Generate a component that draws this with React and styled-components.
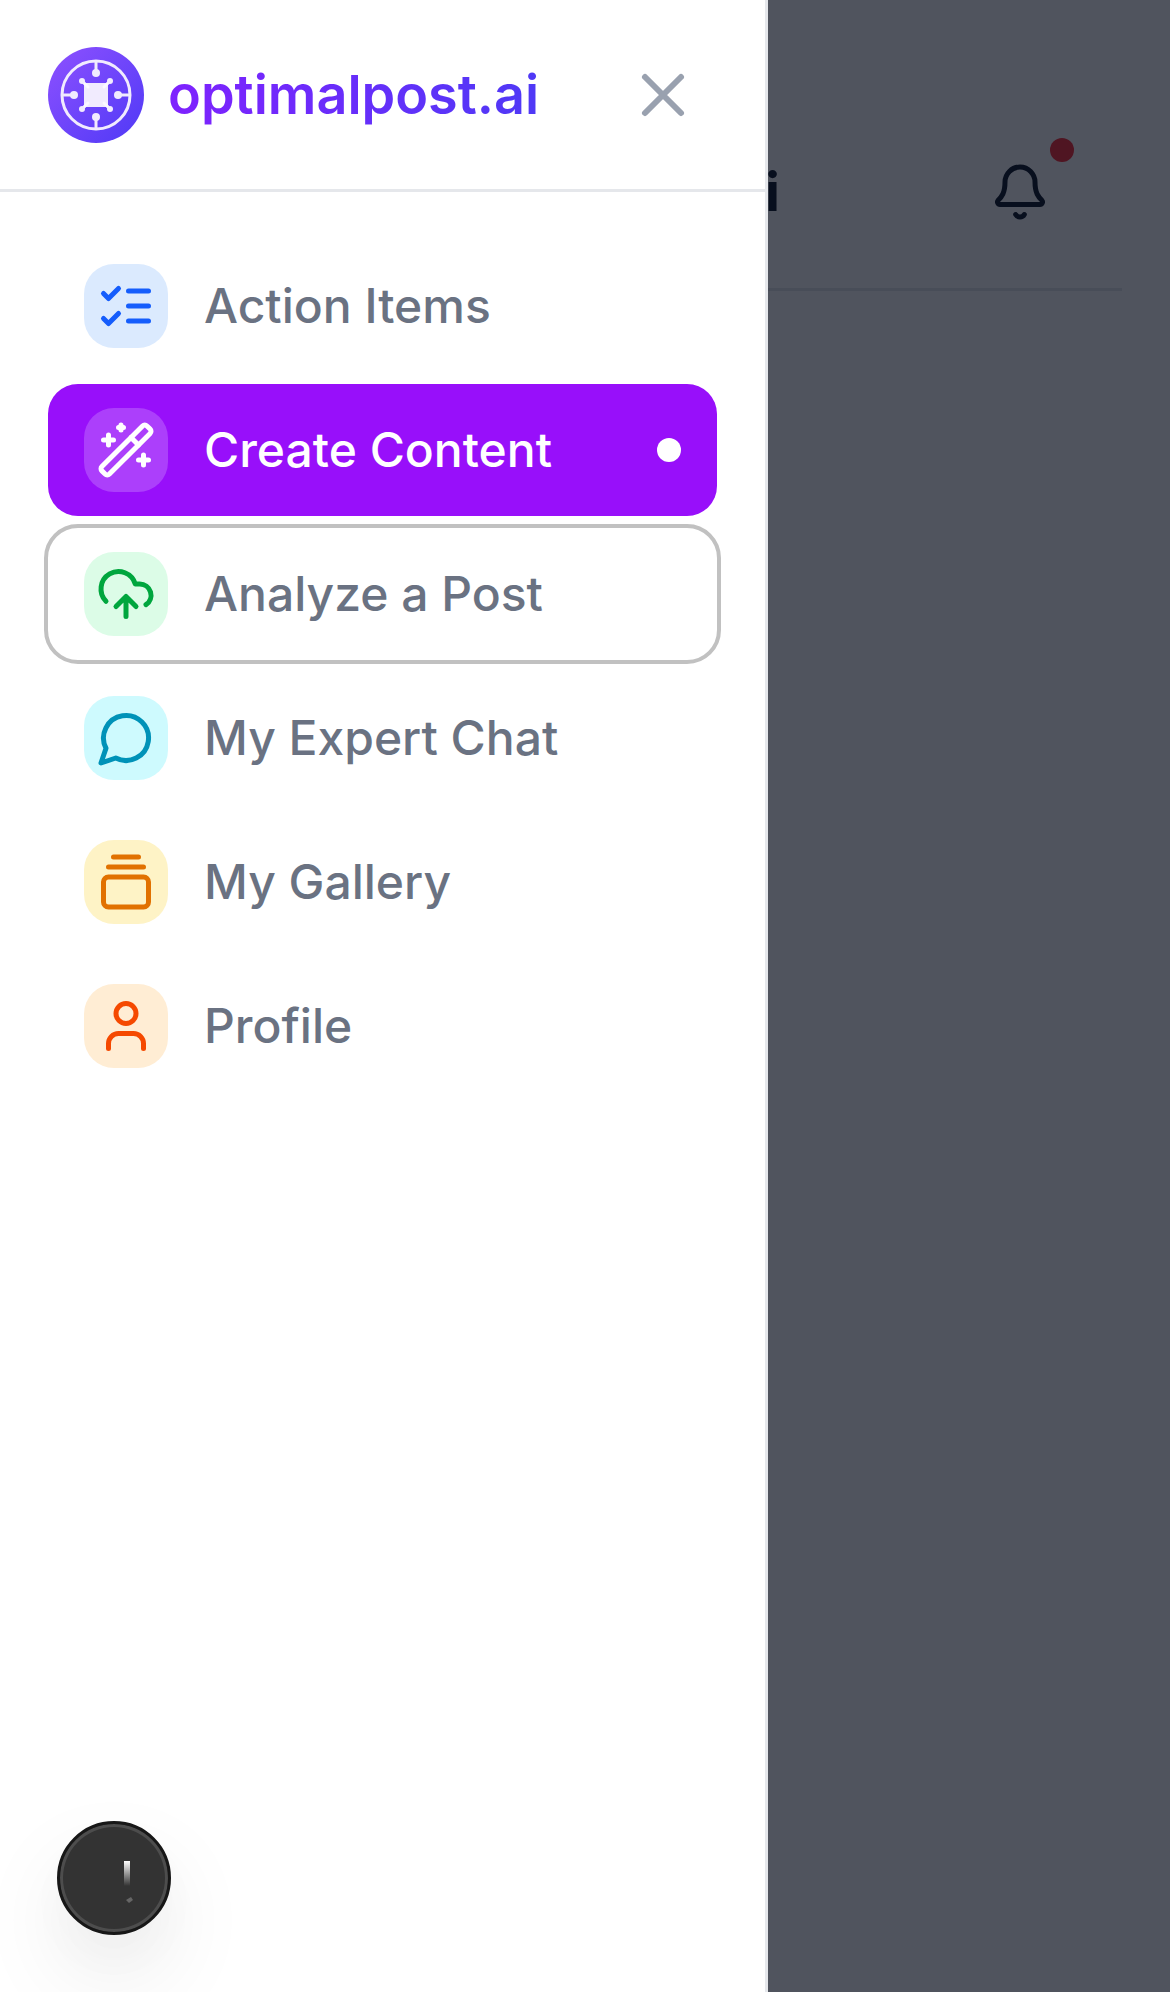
import React from "react";
import styled, { createGlobalStyle } from "styled-components";

const GlobalStyle = createGlobalStyle`
  *, *::before, *::after { box-sizing: border-box; }
  body {
    margin: 0;
    background: #ffffff;
    font-family: Inter, "Liberation Sans", sans-serif;
  }
  button { font: inherit; color: inherit; border: 0; background: none; padding: 0; cursor: pointer; }
  a { color: inherit; text-decoration: none; }
  svg { display: block; flex: none; }
`;

const Shell = styled.div`
  position: relative;
  min-height: 100vh;
`;

const Page = styled.div`
  min-height: 100vh;
  padding: 96px 48px 48px;
  background: #ffffff;
`;

const PageHeader = styled.header`
  display: flex;
  align-items: center;
  justify-content: flex-end;
  gap: 198px;
  height: 195px;
  padding-right: 60px;
  border-bottom: 3px solid #e5e7eb;
  color: #101828;
`;

const PageTitle = styled.h1`
  margin: 0;
  font-size: 54px;
  line-height: 84px;
  font-weight: 700;
`;

const BellButton = styled.button`
  position: relative;
  padding: 12px;
`;

const AlertDot = styled.span`
  position: absolute;
  top: -12px;
  right: -12px;
  width: 24px;
  height: 24px;
  border-radius: 50%;
  background: #fb2c36;
`;

const Scrim = styled.div`
  position: absolute;
  inset: 0;
  background: rgba(5, 11, 25, 0.7);
`;

const Drawer = styled.aside`
  position: absolute;
  inset: 0 auto 0 0;
  display: flex;
  flex-direction: column;
  width: 768px;
  max-width: 100%;
  background: #ffffff;
  border-right: 3px solid #e5e7eb;
`;

const DrawerHeader = styled.div`
  display: flex;
  align-items: center;
  justify-content: space-between;
  height: 192px;
  padding: 0 48px;
  border-bottom: 3px solid #e5e7eb;
`;

const Brand = styled.a`
  display: flex;
  align-items: center;
  gap: 24px;
`;

const BrandName = styled.span`
  font-size: 54px;
  line-height: 84px;
  font-weight: 600;
  color: transparent;
  background: linear-gradient(90deg, #7f22fe, #4f39f6);
  background-clip: text;
`;

const CloseButton = styled.button`
  padding: 18px;
  color: #99a1af;
`;

const Nav = styled.nav`
  padding: 48px;
`;

const NavList = styled.ul`
  display: flex;
  flex-direction: column;
  gap: 12px;
  margin: 0;
  padding: 0;
  list-style: none;
`;

const NavLink = styled.a`
  display: flex;
  align-items: center;
  gap: 36px;
  height: 132px;
  padding: 0 36px;
  border-radius: 30px;
  font-size: 48px;
  line-height: 72px;
  font-weight: 500;
  color: ${(p) => (p.$active ? "#ffffff" : "#6a7282")};
  background: ${(p) => (p.$active ? "#980ffa" : "transparent")};
  outline: ${(p) => (p.$focused ? "4px solid #c1c1c1" : "none")};
`;

const IconTile = styled.span`
  display: grid;
  place-items: center;
  flex: none;
  width: 84px;
  height: 84px;
  border-radius: 30px;
  color: ${(p) => p.$ink};
  background: ${(p) => p.$tint};
`;

const ActiveDot = styled.span`
  width: 24px;
  height: 24px;
  margin-left: auto;
  border-radius: 50%;
  background: #ffffff;
`;

const FloatingButton = styled.button`
  position: absolute;
  left: 57px;
  bottom: 57px;
  display: grid;
  place-items: center;
  width: 114px;
  height: 114px;
  border-radius: 50%;
  border: 3px solid #171717;
  background: #333333;
  box-shadow: inset 0 0 0 3px #4d4d4d, 0 42px 90px rgba(0, 0, 0, 0.08), 0 24px 48px rgba(0, 0, 0, 0.02);
`;

const Icon = ({ size = 60, children }) => (
  <svg
    width={size}
    height={size}
    viewBox="0 0 24 24"
    fill="none"
    stroke="currentColor"
    strokeWidth="2"
    strokeLinecap="round"
    strokeLinejoin="round"
    aria-hidden="true"
  >
    {children}
  </svg>
);

const Logo = () => (
  <svg width="96" height="96" viewBox="0 0 96 96" aria-hidden="true">
    <defs>
      <linearGradient id="logo-fill" x1="0" y1="0" x2="1" y2="1">
        <stop offset="0" stopColor="#8e51ff" />
        <stop offset="1" stopColor="#4f39f6" />
      </linearGradient>
    </defs>
    <circle cx="48" cy="48" r="48" fill="url(#logo-fill)" />
    <g fill="none" stroke="#f1ebfe" strokeWidth="3">
      <circle cx="48" cy="48" r="34" />
      <path d="M48 14v12M48 70v12M14 48h12M70 48h12" />
      <path d="M34 34l8 8M62 34l-8 8M34 62l8-8M62 62l-8-8" />
    </g>
    <g fill="#f1ebfe">
      <rect x="36" y="36" width="24" height="24" />
      <circle cx="48" cy="26" r="4" />
      <circle cx="48" cy="70" r="4" />
      <circle cx="26" cy="48" r="4" />
      <circle cx="70" cy="48" r="4" />
      <circle cx="34" cy="34" r="3" />
      <circle cx="62" cy="34" r="3" />
      <circle cx="34" cy="62" r="3" />
      <circle cx="62" cy="62" r="3" />
    </g>
    <path
      d="M37 37l3 3M59 37l-3 3M37 59l3-3M59 59l-3-3"
      stroke="#fbf9ff"
      strokeWidth="3"
      strokeLinecap="round"
    />
  </svg>
);

const items = [
  {
    label: "Action Items",
    ink: "#155dfc",
    tint: "#dbeafe",
    icon: <path d="m3 17 2 2 4-4M3 7l2 2 4-4M13 6h8M13 12h8M13 18h8" />,
  },
  {
    label: "Create Content",
    ink: "#ffffff",
    tint: "rgba(255, 255, 255, 0.2)",
    active: true,
    icon: (
      <>
        <path d="m21.64 3.64-1.28-1.28a1.21 1.21 0 0 0-1.72 0L2.36 18.64a1.21 1.21 0 0 0 0 1.72l1.28 1.28a1.2 1.2 0 0 0 1.72 0L21.64 5.36a1.2 1.2 0 0 0 0-1.72" />
        <path d="m14 7 3 3M5 6v4M19 14v4M10 2v2M7 8H3M21 16h-4M11 3H9" />
      </>
    ),
  },
  {
    label: "Analyze a Post",
    ink: "#00a63e",
    tint: "#dcfce7",
    focused: true,
    icon: (
      <>
        <path d="M12 13v8M8 17l4-4 4 4" />
        <path d="M4 14.899A7 7 0 1 1 15.71 8h1.79a4.5 4.5 0 0 1 2.5 8.242" />
      </>
    ),
  },
  {
    label: "My Expert Chat",
    ink: "#0092b8",
    tint: "#cefafe",
    icon: <path d="M7.9 20A9 9 0 1 0 4 16.1L2 22Z" />,
  },
  {
    label: "My Gallery",
    ink: "#e17100",
    tint: "#fef3c6",
    icon: (
      <>
        <path d="M7 2h10M5 6h14" />
        <rect width="18" height="12" x="3" y="10" rx="2" />
      </>
    ),
  },
  {
    label: "Profile",
    ink: "#f54900",
    tint: "#ffedd4",
    icon: (
      <>
        <path d="M19 21v-2a4 4 0 0 0-4-4H9a4 4 0 0 0-4 4v2" />
        <circle cx="12" cy="7" r="4" />
      </>
    ),
  },
];

export default function App() {
  return (
    <Shell>
      <GlobalStyle />
      <Page>
        <PageHeader>
          <PageTitle>optimalpost.ai</PageTitle>
          <BellButton aria-label="Notifications">
            <Icon>
              <path d="M10.268 21a2 2 0 0 0 3.464 0" />
              <path d="M3.262 15.326A1 1 0 0 0 4 17h16a1 1 0 0 0 .74-1.673C19.41 13.956 18 12.499 18 8A6 6 0 0 0 6 8c0 4.499-1.411 5.956-2.738 7.326" />
            </Icon>
            <AlertDot />
          </BellButton>
        </PageHeader>
      </Page>
      <Scrim />
      <Drawer>
        <DrawerHeader>
          <Brand href="#">
            <Logo />
            <BrandName>optimalpost.ai</BrandName>
          </Brand>
          <CloseButton aria-label="Close menu">
            <Icon size={72}>
              <path d="M18 6 6 18M6 6l12 12" />
            </Icon>
          </CloseButton>
        </DrawerHeader>
        <Nav>
          <NavList>
            {items.map((item) => (
              <li key={item.label}>
                <NavLink href="#" $active={item.active} $focused={item.focused}>
                  <IconTile $ink={item.ink} $tint={item.tint}>
                    <Icon>{item.icon}</Icon>
                  </IconTile>
                  {item.label}
                  {item.active && <ActiveDot />}
                </NavLink>
              </li>
            ))}
          </NavList>
        </Nav>
      </Drawer>
      <FloatingButton aria-label="Open tools">
        <svg width="108" height="108" viewBox="0 0 108 108" aria-hidden="true">
          <defs>
            <linearGradient id="bar-fade" x1="0" y1="0" x2="0" y2="1">
              <stop offset="0" stopColor="#ffffff" />
              <stop offset="1" stopColor="#333333" />
            </linearGradient>
          </defs>
          <rect x="64" y="37" width="6" height="25" fill="url(#bar-fade)" />
          <path d="M66 76l5-3 2 3-4 3z" fill="#666666" />
        </svg>
      </FloatingButton>
    </Shell>
  );
}
